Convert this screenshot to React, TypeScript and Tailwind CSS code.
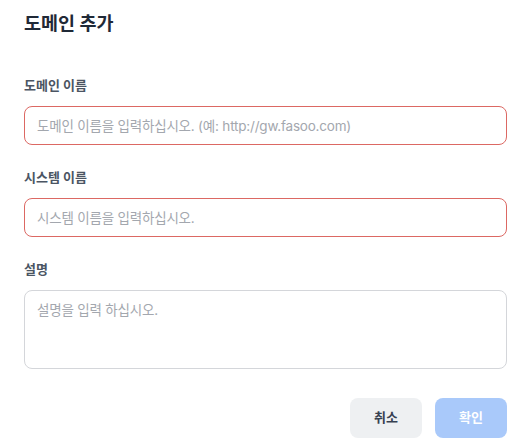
import React from "react";

const font = { fontFamily: 'Inter, "Noto Sans CJK KR", sans-serif' };

function Label({ children }: { children: React.ReactNode }) {
  return (
    <div className="text-[13px] leading-[20px] font-bold text-[#4b5563] mb-[11px]">{children}</div>
  );
}

export default function App() {
  return (
    <div className="w-[531px] h-[448px] bg-white px-6 pt-[9px]" style={font}>
      <h1 className="text-[18.5px] leading-[28px] font-bold text-[#1f2937]">도메인 추가</h1>
      <div className="mt-[38px] flex flex-col">
        <Label>도메인 이름</Label>
        <input
          className="h-[39px] w-full rounded-[8px] border border-[#dc6863] px-3 text-[13.5px] tracking-[-0.2px] outline-none placeholder:text-[#a3a7ae]"
          placeholder="도메인 이름을 입력하십시오. (예: http://gw.fasoo.com)"
        />
        <div className="mt-[22px]">
          <Label>시스템 이름</Label>
        </div>
        <input
          className="h-[39px] w-full rounded-[8px] border border-[#dc6863] px-3 text-[13.5px] tracking-[-0.2px] outline-none placeholder:text-[#a3a7ae]"
          placeholder="시스템 이름을 입력하십시오."
        />
        <div className="mt-[22px]">
          <Label>설명</Label>
        </div>
        <textarea
          className="h-[79px] w-full resize-none rounded-[8px] border border-[#d4d6da] px-3 py-[9px] text-[13.5px] tracking-[-0.2px] outline-none placeholder:text-[#a3a7ae]"
          placeholder="설명을 입력 하십시오."
        />
        <div className="mt-[29px] flex justify-end gap-[13px]">
          <button className="h-[40px] w-[72px] rounded-[8px] bg-[#eef0f2] text-[13px] font-bold text-[#374151]">취소</button>
          <button className="h-[40px] w-[72px] rounded-[8px] bg-[#a9c9fa] text-[13px] font-bold text-white">확인</button>
        </div>
      </div>
    </div>
  );
}
